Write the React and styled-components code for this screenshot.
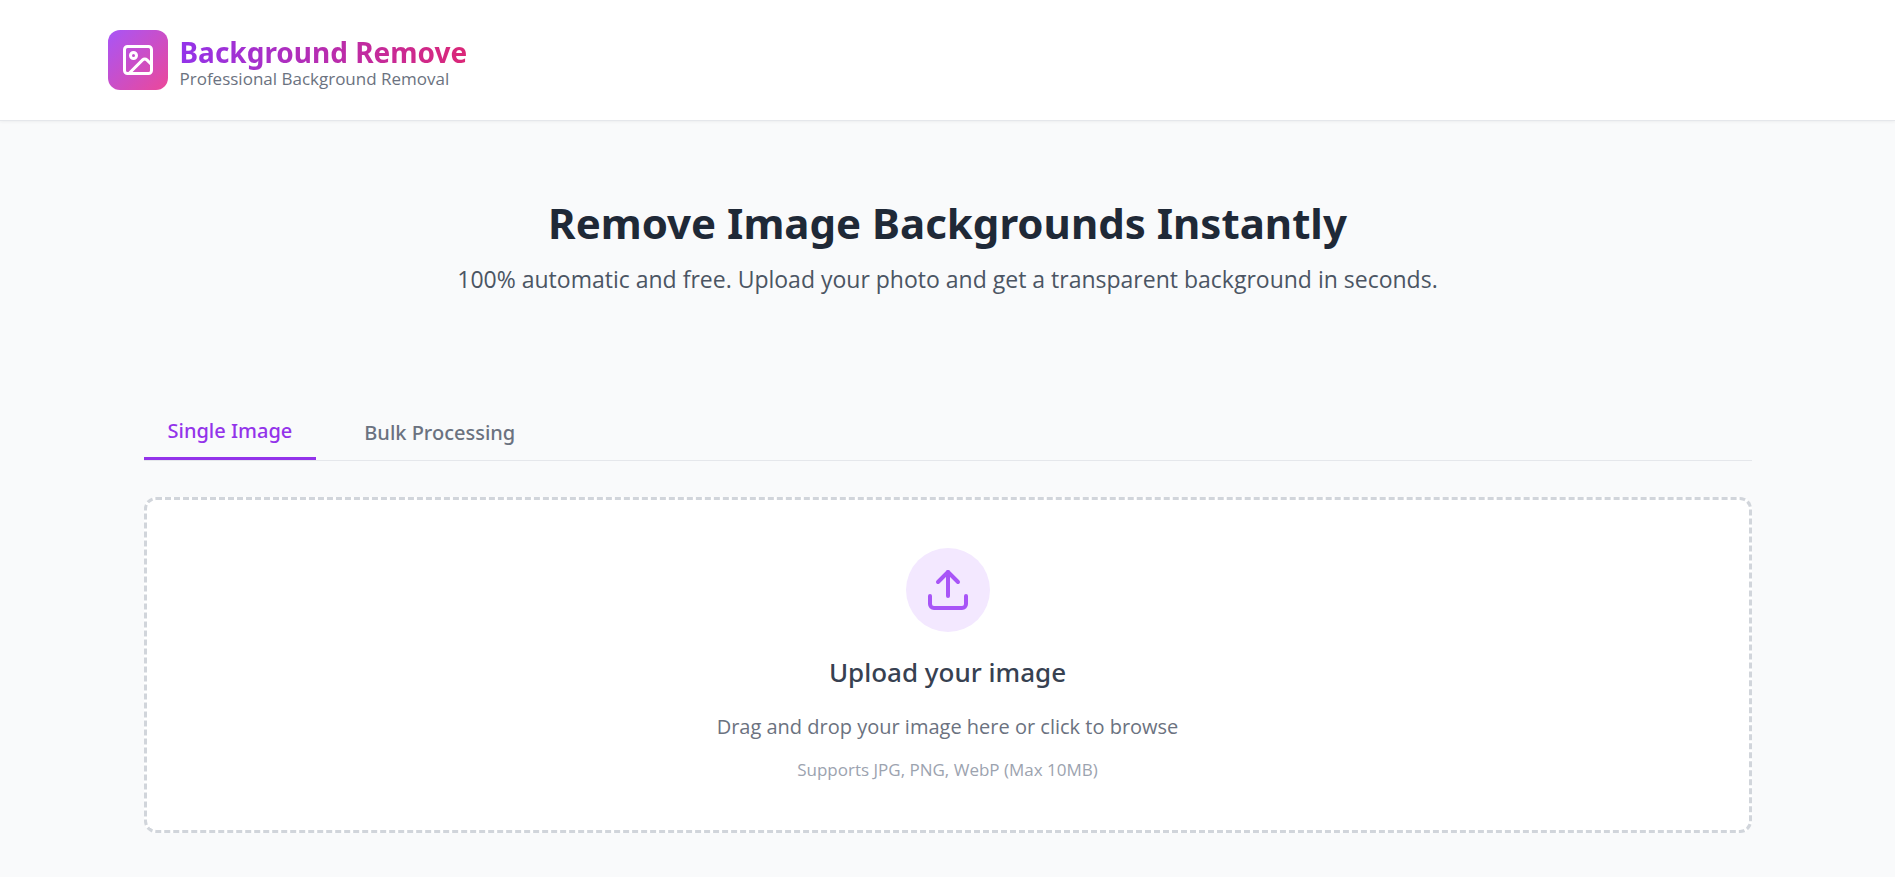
import React, { useState } from "react";
import styled, { createGlobalStyle } from "styled-components";
import { Image, Upload } from "lucide-react";

const strongFont = `"Noto Sans", "Open Sans", sans-serif`;

const GlobalStyle = createGlobalStyle`
  *, *::before, *::after { box-sizing: border-box; }
  body {
    margin: 0;
    background: #f9fafb;
    color: #1f2937;
    font-family: "Open Sans", "Noto Sans", sans-serif;
  }
  h1, h2, h3, p { margin: 0; }
`;

const Header = styled.header`
  background: #ffffff;
  border-bottom: 1px solid #e5e7eb;
  box-shadow: 0 1px 3px rgba(0, 0, 0, 0.05);
`;

const Container = styled.div`
  max-width: 1728px;
  margin: 0 auto;
  padding: 0 24px;
`;

const Brand = styled.div`
  display: flex;
  align-items: center;
  gap: 12px;
  padding: 30px 0;
`;

const Logo = styled.span`
  display: flex;
  align-items: center;
  justify-content: center;
  width: 60px;
  height: 60px;
  border-radius: 12px;
  background: linear-gradient(to bottom right, #a855f7, #ec4899);
  color: #ffffff;
`;

const BrandText = styled.div`
  padding-top: 2px;
`;

const BrandName = styled.h1`
  width: max-content;
  font-family: ${strongFont};
  font-size: 28px;
  font-weight: 700;
  line-height: 36px;
  background: linear-gradient(to right, #9333ea, #db2777);
  background-clip: text;
  -webkit-background-clip: text;
  color: transparent;
`;

const Tagline = styled.p`
  font-size: 17px;
  line-height: 18px;
  color: #6b7280;
`;

const Hero = styled.section`
  padding: 72px 0 108px;
  text-align: center;
`;

const HeroTitle = styled.h2`
  font-family: ${strongFont};
  font-size: 42px;
  font-weight: 700;
  line-height: 60px;
`;

const HeroText = styled.p`
  margin-top: 8px;
  font-size: 23px;
  line-height: 36px;
  color: #4b5563;
`;

const Workspace = styled.section`
  padding: 0 36px 36px;
`;

const TabList = styled.div`
  display: flex;
  align-items: stretch;
  gap: 24px;
  margin-bottom: 36px;
  border-bottom: 1px solid #e5e7eb;
`;

const Tab = styled.button`
  padding: 12px 24px;
  border: 0;
  border-bottom: ${(p) => (p.$active ? "3px solid #9333ea" : "0")};
  background: none;
  font-family: ${strongFont};
  font-size: 20px;
  font-weight: 500;
  line-height: 28px;
  color: ${(p) => (p.$active ? "#9333ea" : "#6b7280")};
  cursor: pointer;
`;

const DropZone = styled.label`
  display: flex;
  flex-direction: column;
  align-items: center;
  padding: 48px;
  border: 3px dashed #d1d5db;
  border-radius: 12px;
  background: #ffffff;
  text-align: center;
  cursor: pointer;
`;

const FileInput = styled.input`
  display: none;
`;

const UploadBadge = styled.span`
  display: flex;
  align-items: center;
  justify-content: center;
  width: 84px;
  height: 84px;
  margin-bottom: 24px;
  border-radius: 50%;
  background: #f3e8ff;
  color: #a855f7;
`;

const DropTitle = styled.h3`
  font-family: ${strongFont};
  font-size: 26px;
  font-weight: 500;
  line-height: 32px;
  color: #374151;
`;

const DropText = styled.p`
  margin-top: 24px;
  font-size: 20px;
  line-height: 30px;
  color: #6b7280;
`;

const DropHint = styled.p`
  margin-top: 16px;
  font-size: 17px;
  line-height: 24px;
  color: #9ca3af;
`;

const TABS = ["Single Image", "Bulk Processing"];

export default function App() {
  const [active, setActive] = useState(TABS[0]);
  return (
    <>
      <GlobalStyle />
      <Header>
        <Container>
          <Brand>
            <Logo>
              <Image size={36} />
            </Logo>
            <BrandText>
              <BrandName>Background Remove</BrandName>
              <Tagline>Professional Background Removal</Tagline>
            </BrandText>
          </Brand>
        </Container>
      </Header>
      <Container as="main">
        <Hero>
          <HeroTitle>Remove Image Backgrounds Instantly</HeroTitle>
          <HeroText>
            100% automatic and free. Upload your photo and get a transparent background in seconds.
          </HeroText>
        </Hero>
        <Workspace>
          <TabList role="tablist">
            {TABS.map((name) => (
              <Tab
                key={name}
                type="button"
                role="tab"
                aria-selected={active === name}
                $active={active === name}
                onClick={() => setActive(name)}
              >
                {name}
              </Tab>
            ))}
          </TabList>
          <DropZone htmlFor="image-file">
            <FileInput id="image-file" type="file" accept="image/jpeg,image/png,image/webp" />
            <UploadBadge>
              <Upload size={48} />
            </UploadBadge>
            <DropTitle>Upload your image</DropTitle>
            <DropText>Drag and drop your image here or click to browse</DropText>
            <DropHint>Supports JPG, PNG, WebP (Max 10MB)</DropHint>
          </DropZone>
        </Workspace>
      </Container>
    </>
  );
}
